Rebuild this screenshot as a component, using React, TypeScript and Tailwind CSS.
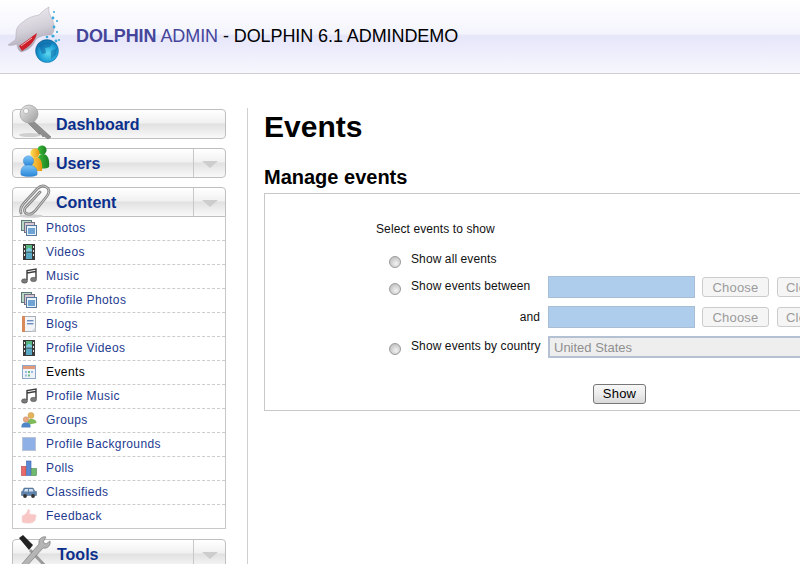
import React from "react";

const Logo = () => (
  <svg width="58" height="60" viewBox="0 0 58 60" className="absolute left-[7px] top-[5px]">
    <defs>
      <linearGradient id="dol" x1="0.2" y1="0" x2="0.5" y2="1">
        <stop offset="0" stopColor="#f2eff3" />
        <stop offset="0.55" stopColor="#d3cfd8" />
        <stop offset="1" stopColor="#a19cab" />
      </linearGradient>
      <radialGradient id="glb" cx="0.55" cy="0.6" r="0.7">
        <stop offset="0" stopColor="#5fd8ee" />
        <stop offset="0.55" stopColor="#1a9ed6" />
        <stop offset="1" stopColor="#0b4f88" />
      </radialGradient>
    </defs>
    <path d="M42 2 C38 4 35 7 32 10 C26 11 20 13 16 17 C11 20 9 24 9 29 C9 32 9 34 8 35 L1 40 C4 41 7 40 10 39 C10 43 12 46 14 47 C19 46 25 43 28 36 C31 31 37 30 44 30 C48 27 48 20 45 14 C43 10 41 6 42 2 Z" fill="url(#dol)" stroke="#aaa5b2" strokeWidth="0.5" />
    <path d="M12 41 C18 37 23 33 30 28 C29 35 22 42 15 46 Z" fill="#cc1f2a" />
    <path d="M14 41 C18 38 21 36 25 33" fill="none" stroke="#f4d6d6" strokeWidth="0.8" />
    <circle cx="40" cy="46" r="11.5" fill="url(#glb)" stroke="#0d5f98" strokeWidth="0.4" />
    <path d="M32 41 C35 37 41 36 45 38 L43 42 L38 43 L39 48 L35 49 Z" fill="#0c5f9e" opacity="0.55" />
    <path d="M44 46 L50 43 L49 50 L44 54 Z" fill="#0c5f9e" opacity="0.45" />
    <g fill="#3aa9dc">
      <circle cx="47" cy="7" r="1" />
      <circle cx="46" cy="13" r="1.4" />
      <circle cx="50" cy="16" r="1.1" />
      <circle cx="47" cy="22" r="1.4" />
      <circle cx="50" cy="27" r="1.1" />
      <circle cx="46" cy="31" r="1.6" />
      <circle cx="40" cy="32" r="1.3" />
      <circle cx="52" cy="35" r="1.1" />
      <circle cx="49" cy="36" r="1.4" />
    </g>
  </svg>
);

const KeyIcon = () => (
  <svg width="36" height="36" viewBox="0 0 36 36">
    <defs>
      <linearGradient id="key" x1="0" y1="0" x2="1" y2="1">
        <stop offset="0" stopColor="#ececec" />
        <stop offset="1" stopColor="#9a9a9a" />
      </linearGradient>
    </defs>
    <ellipse cx="12" cy="31" rx="11" ry="2" fill="#cfcfcf" />
    <path d="M13 15 L33 33 L30 35 L26 32 L25 33 L23 30 L21 30 L10 19 Z" fill="#8e8e8e" stroke="#6f6f6f" strokeWidth="0.6" />
    <circle cx="11" cy="10" r="9" fill="url(#key)" stroke="#a5a5a5" strokeWidth="0.8" />
    <circle cx="8" cy="7" r="2.6" fill="#f8f8f8" stroke="#a0a0a0" strokeWidth="0.6" />
  </svg>
);

const UsersIcon = () => (
  <svg width="34" height="34" viewBox="0 0 34 34">
    <defs>
      <linearGradient id="ug" x1="0" y1="0" x2="1" y2="0">
        <stop offset="0" stopColor="#3fc13a" />
        <stop offset="1" stopColor="#1c7f22" />
      </linearGradient>
      <linearGradient id="uy" x1="0" y1="0" x2="1" y2="0">
        <stop offset="0" stopColor="#ffe05a" />
        <stop offset="1" stopColor="#e8930f" />
      </linearGradient>
      <linearGradient id="ub" x1="0" y1="0" x2="0" y2="1">
        <stop offset="0" stopColor="#7cc6f7" />
        <stop offset="1" stopColor="#2a86d8" />
      </linearGradient>
    </defs>
    <circle cx="24" cy="6" r="4.6" fill="url(#ug)" />
    <path d="M19 23 C18 14 21 10 25 10 C29 10 32 14 31 23 C28 25 22 25 19 23 Z" fill="url(#ug)" />
    <circle cx="17" cy="9" r="4.6" fill="url(#uy)" />
    <path d="M11 27 C10 17 13 13 17.5 13 C22 13 25 17 24 27 Z" fill="url(#uy)" />
    <circle cx="10.5" cy="17" r="5.2" fill="url(#ub)" stroke="#2f77c0" strokeWidth="0.4" />
    <path d="M3 31 C2 24 5 21 10.5 21 C16 21 20 24 19 31 C15 33 7 33 3 31 Z" fill="url(#ub)" stroke="#2f77c0" strokeWidth="0.4" />
  </svg>
);

const ClipIcon = () => (
  <svg width="34" height="36" viewBox="0 0 34 36">
    <ellipse cx="13" cy="33" rx="12" ry="1.8" fill="#d0d0d0" />
    <path d="M22 9 L8 24 C5 27 7 31 10 31 C13 32 15 30 17 28 L29 13 C32 9 31 5 28 4 C25 2 22 3 19 6 L7 19 C3 23 2 27 3 30" fill="none" stroke="#858585" strokeWidth="2.8" strokeLinecap="round" />
    <path d="M22 9 L8 24 C5 27 7 31 10 31 C13 32 15 30 17 28 L29 13 C32 9 31 5 28 4 C25 2 22 3 19 6 L7 19 C3 23 2 27 3 30" fill="none" stroke="#dcdcdc" strokeWidth="0.9" strokeLinecap="round" />
  </svg>
);

const ToolsIcon = () => (
  <svg width="34" height="36" viewBox="0 0 34 36">
    <path d="M12 15 L30 34" stroke="#9a9a9a" strokeWidth="3" />
    <path d="M1 3 L5 0 L15 10 L11 15 Z" fill="#222" />
    <path d="M28 2 C24 1 20 4 21 9 L3 30 L7 33 L25 13 C30 14 33 10 32 6 L28 9 L25 7 Z" fill="#b5b5b5" stroke="#7c7c7c" strokeWidth="0.7" />
  </svg>
);

const PhotosIcon = () => (
  <svg width="16" height="16" viewBox="0 0 16 16">
    <rect x="0.5" y="0.5" width="10" height="10" fill="#b9d6c4" stroke="#5d7a78" />
    <rect x="3.5" y="2.5" width="10" height="10" fill="#dcc7d0" stroke="#6d7488" />
    <rect x="5.5" y="5.5" width="10" height="10" fill="#e8f2fa" stroke="#56789c" />
    <rect x="7" y="8" width="7" height="6" fill="#6fa3d4" />
  </svg>
);

const FilmIcon = () => (
  <svg width="16" height="16" viewBox="0 0 16 16">
    <rect x="2" y="0" width="12" height="16" fill="#3a3a3a" />
    <rect x="5" y="1" width="6" height="6.5" fill="#55b37c" />
    <rect x="5" y="8.5" width="6" height="6.5" fill="#5aa7c4" />
    <path d="M5 6 L8 3.5 L11 5.5 V7.5 H5 Z" fill="#7fc7e0" />
    <g fill="#e8e8e8">
      <rect x="3" y="2" width="1" height="2" />
      <rect x="3" y="6" width="1" height="2" />
      <rect x="3" y="10" width="1" height="2" />
      <rect x="12" y="2" width="1" height="2" />
      <rect x="12" y="6" width="1" height="2" />
      <rect x="12" y="10" width="1" height="2" />
    </g>
  </svg>
);

const MusicIcon = () => (
  <svg width="16" height="16" viewBox="0 0 16 16">
    <path d="M6 12 V2.5 L15 1 V10.5 M6 5 L15 3.5" fill="none" stroke="#3c3c3c" strokeWidth="1.4" />
    <ellipse cx="3.5" cy="13" rx="3" ry="2.2" fill="#7a7a7a" stroke="#444" strokeWidth="0.5" />
    <ellipse cx="12.5" cy="11.5" rx="3" ry="2.2" fill="#7a7a7a" stroke="#444" strokeWidth="0.5" />
  </svg>
);

const BlogIcon = () => (
  <svg width="16" height="16" viewBox="0 0 16 16">
    <rect x="1.5" y="0.5" width="13" height="15" fill="#f2f4f8" stroke="#a7adbb" />
    <rect x="1" y="0" width="3" height="16" fill="#d98a5a" />
    <rect x="6" y="4" width="6.5" height="1.4" fill="#6b8fc2" />
    <rect x="6" y="7" width="6.5" height="1.4" fill="#6b8fc2" />
    <path d="M10 15.5 L14.5 11 V15.5 Z" fill="#d5d8de" />
  </svg>
);

const CalendarIcon = () => (
  <svg width="14" height="14" viewBox="0 0 14 14">
    <rect x="0.5" y="0.5" width="13" height="13" fill="#eef3fa" stroke="#8fa6c8" />
    <rect x="1" y="1" width="12" height="3" fill="#e39a78" />
    <g fill="#9bbbe0">
      <rect x="3" y="6" width="2" height="2" />
      <rect x="9" y="6" width="2" height="2" />
      <rect x="3" y="9.5" width="2" height="2" />
    </g>
    <g fill="#6dbb7d">
      <rect x="6" y="6" width="2" height="2" />
      <rect x="6" y="9.5" width="2" height="2" />
    </g>
  </svg>
);

const GroupsIcon = () => (
  <svg width="16" height="16" viewBox="0 0 16 16">
    <circle cx="10" cy="3.5" r="3" fill="#e4b45c" stroke="#b88a3a" strokeWidth="0.4" />
    <path d="M6 13 C6 8 8 7 10.5 7 C13 7 15.5 8 15.5 11 Z" fill="#7fba5c" />
    <circle cx="5" cy="7.5" r="2.8" fill="#e8a880" stroke="#b8805c" strokeWidth="0.4" />
    <path d="M0.5 15.5 C0 12 2 10.5 5 10.5 C8 10.5 10 12 9.5 15.5 Z" fill="#4f86c8" />
  </svg>
);

const BgIcon = () => (
  <svg width="14" height="14" viewBox="0 0 14 14">
    <rect x="0.5" y="0.5" width="13" height="13" fill="#8fb0e6" stroke="#b9c3d4" />
  </svg>
);

const PollsIcon = () => (
  <svg width="16" height="16" viewBox="0 0 16 16">
    <rect x="0.5" y="6.5" width="4.5" height="9" fill="#e86a6a" stroke="#b84040" strokeWidth="0.6" />
    <rect x="5.5" y="1" width="4.5" height="14.5" fill="#5a8ad6" stroke="#3a62a8" strokeWidth="0.6" />
    <rect x="10.5" y="8.5" width="5" height="7" fill="#6fb86f" stroke="#46894a" strokeWidth="0.6" />
  </svg>
);

const CarIcon = () => (
  <svg width="16" height="16" viewBox="0 0 16 16">
    <path d="M3 4 H12 L14 7.5 H15.5 V11.5 H0.5 V7.5 H1.5 Z" fill="#5f83ad" stroke="#46617f" strokeWidth="0.5" />
    <path d="M4 5 H7 V7.5 H3 Z M8 5 H11.5 L12.5 7.5 H8 Z" fill="#cfe0ef" />
    <circle cx="4" cy="12" r="1.9" fill="#333" />
    <circle cx="12" cy="12" r="1.9" fill="#333" />
  </svg>
);

const ThumbIcon = () => (
  <svg width="16" height="16" viewBox="0 0 16 16">
    <path d="M1 8 C3 7 5 6 6 4 C6.5 2 7 1 8 1.5 C9.5 2 8.5 5 8.5 6 L14 6.5 C15.5 7 15.5 9 14.5 10 C15 11.5 14 13 13 13.5 C12 15 9 15.5 5 15 C3 15 1 15 1 13 Z" fill="#f9c6c6" stroke="#f2dcdc" strokeWidth="0.6" />
  </svg>
);

const Arrow = () => (
  <div className="flex h-full w-[32px] items-center justify-center border-l border-[#c8c8c8]">
    <div className="mt-[2px] h-0 w-0 border-x-[8px] border-t-[7px] border-x-transparent border-t-[#cdcdcd]" />
  </div>
);

function MenuHead({
  label,
  icon,
  arrow,
  iconTop,
  textLeft = 43,
  flat,
  mb,
}: {
  label: string;
  icon: React.ReactNode;
  arrow?: boolean;
  iconTop: string;
  textLeft?: number;
  flat?: boolean;
  mb: string;
}) {
  return (
    <div
      className={`relative flex h-[30px] items-center justify-between border border-[#bfbfbf] bg-[linear-gradient(180deg,#ffffff_0%,#f1f1f1_46%,#e1e1e1_50%,#f9f9f9_100%)] ${
        flat ? "rounded-t-[4px]" : "rounded-[4px]"
      } ${mb}`}
    >
      <div className={`absolute left-[5px] ${iconTop}`}>{icon}</div>
      <span
        className="mt-[1px] text-[16px] font-bold text-[#0b2f8c]"
        style={{ marginLeft: textLeft }}
      >
        {label}
      </span>
      {arrow && <Arrow />}
    </div>
  );
}

const items: { label: string; icon: React.ReactNode; active?: boolean }[] = [
  { label: "Photos", icon: <PhotosIcon /> },
  { label: "Videos", icon: <FilmIcon /> },
  { label: "Music", icon: <MusicIcon /> },
  { label: "Profile Photos", icon: <PhotosIcon /> },
  { label: "Blogs", icon: <BlogIcon /> },
  { label: "Profile Videos", icon: <FilmIcon /> },
  { label: "Events", icon: <CalendarIcon />, active: true },
  { label: "Profile Music", icon: <MusicIcon /> },
  { label: "Groups", icon: <GroupsIcon /> },
  { label: "Profile Backgrounds", icon: <BgIcon /> },
  { label: "Polls", icon: <PollsIcon /> },
  { label: "Classifieds", icon: <CarIcon /> },
  { label: "Feedback", icon: <ThumbIcon /> },
];

const Radio = ({ top }: { top: string }) => (
  <span
    className={`block h-[12px] w-[12px] shrink-0 rounded-full border border-[#9a9a9a] bg-[radial-gradient(circle_at_60%_65%,#f2f2f2_0%,#cfcfcf_55%,#b5b5b5_100%)] ${top}`}
  />
);

const Choose = ({ label, w }: { label: string; w: string }) => (
  <span
    className={`flex h-[20px] shrink-0 items-center justify-center rounded-[3px] border border-[#cccccc] bg-[#f5f5f5] pt-[1px] text-[13px] tracking-[0.2px] text-[#9b9b9b] ${w}`}
  >
    {label}
  </span>
);

const DateInput = () => (
  <span className="h-[22px] w-[147px] shrink-0 border border-[#a9bdd4] bg-[#aecdec]" />
);

export default function App() {
  return (
    <div className="h-[564px] w-[800px] overflow-hidden bg-white font-['Liberation_Sans',Arial,sans-serif]">
      <header className="relative flex h-[74px] items-center border-b border-[#cfcfcf] bg-[linear-gradient(180deg,#ffffff_0%,#f4f4fd_46%,#e6e6fa_49%,#f7f7fe_100%)] pl-[76px]">
        <Logo />
        <div className="text-[18px] tracking-[-0.08px] text-black">
          <span className="font-bold text-[#45459a]">DOLPHIN</span>
          <span className="text-[#45459a]"> ADMIN</span> - DOLPHIN 6.1 ADMINDEMO
        </div>
      </header>
      <div className="flex pt-[34px]">
        <aside className="ml-[12px] mt-[1px] w-[214px] shrink-0">
          <MenuHead label="Dashboard" icon={<KeyIcon />} iconTop="-top-[6px]" mb="mb-[9px]" />
          <MenuHead label="Users" icon={<UsersIcon />} arrow iconTop="-top-[5px]" mb="mb-[9px]" />
          <MenuHead label="Content" icon={<ClipIcon />} arrow iconTop="-top-[5px]" flat mb="" />
          <ul className="mb-[10px] border-x border-b border-[#c8c8c8]">
            {items.map((it, i) => (
              <li
                key={it.label}
                className={`flex items-center pb-[1px] ${
                  i < items.length - 1 ? "h-[24px] border-b border-dashed border-[#cccccc]" : "h-[23px]"
                }`}
              >
                <span className="flex w-[32px] shrink-0 items-center justify-center">{it.icon}</span>
                <span
                  className={`ml-[1px] text-[12px] tracking-[0.4px] ${
                    it.active ? "text-black" : "text-[#1d3a8f]"
                  }`}
                >
                  {it.label}
                </span>
              </li>
            ))}
          </ul>
          <MenuHead label="Tools" icon={<ToolsIcon />} arrow iconTop="-top-[5px]" textLeft={44} mb="" />
        </aside>
        <div className="ml-[21px] h-[460px] w-[553px] shrink-0 border-l border-[#cfcfcf] pl-[16px]">
          <h1 className="mb-[20px] mt-[1px] text-[30px] leading-[36px] font-bold text-black">Events</h1>
          <h2 className="mb-[4px] text-[20px] leading-[24px] font-bold text-black">Manage events</h2>
          <div className="h-[218px] w-[700px] border border-[#c8c8c8] pl-[111px] pt-[27px] text-[12px] tracking-[0.1px] text-[#111111]">
            <div className="h-[16px] leading-[16px]">Select events to show</div>
            <div className="mt-[13px] ml-[13px] flex h-[16px] leading-[18px]">
              <Radio top="mt-[6px]" />
              <span className="ml-[10px]">Show all events</span>
            </div>
            <div className="mt-[10px] ml-[13px] flex h-[22px]">
              <Radio top="mt-[7px]" />
              <span className="ml-[10px] w-[137px] shrink-0 leading-[20px]">Show events between</span>
              <DateInput />
              <span className="ml-[7px] mt-[1px] flex gap-[8px]">
                <Choose label="Choose" w="w-[67px]" />
                <Choose label="Clear" w="w-[50px]" />
              </span>
            </div>
            <div className="mt-[8px] ml-[13px] flex h-[22px]">
              <span className="w-[151px] shrink-0 text-right leading-[22px]">and</span>
              <span className="w-[8px] shrink-0" />
              <DateInput />
              <span className="ml-[7px] mt-[1px] flex gap-[8px]">
                <Choose label="Choose" w="w-[67px]" />
                <Choose label="Clear" w="w-[50px]" />
              </span>
            </div>
            <div className="mt-[8px] ml-[13px] flex h-[22px]">
              <Radio top="mt-[7px]" />
              <span className="ml-[10px] w-[137px] shrink-0 leading-[20px]">Show events by country</span>
              <span className="flex h-[22px] w-[300px] shrink-0 items-center border-2 border-[#b3c1d3] bg-[#eeeeee] pl-[4px] pt-[1px] text-[13px] tracking-normal text-[#8f8f8f]">
                United States
              </span>
            </div>
            <button className="mt-[26px] ml-[217px] flex h-[20px] w-[53px] items-center justify-center rounded-[3px] border border-[#777777] bg-[linear-gradient(180deg,#f7f7f7_0%,#ececec_50%,#d9d9d9_100%)] text-[13px] tracking-[0.2px] text-black">
              Show
            </button>
          </div>
        </div>
      </div>
    </div>
  );
}
